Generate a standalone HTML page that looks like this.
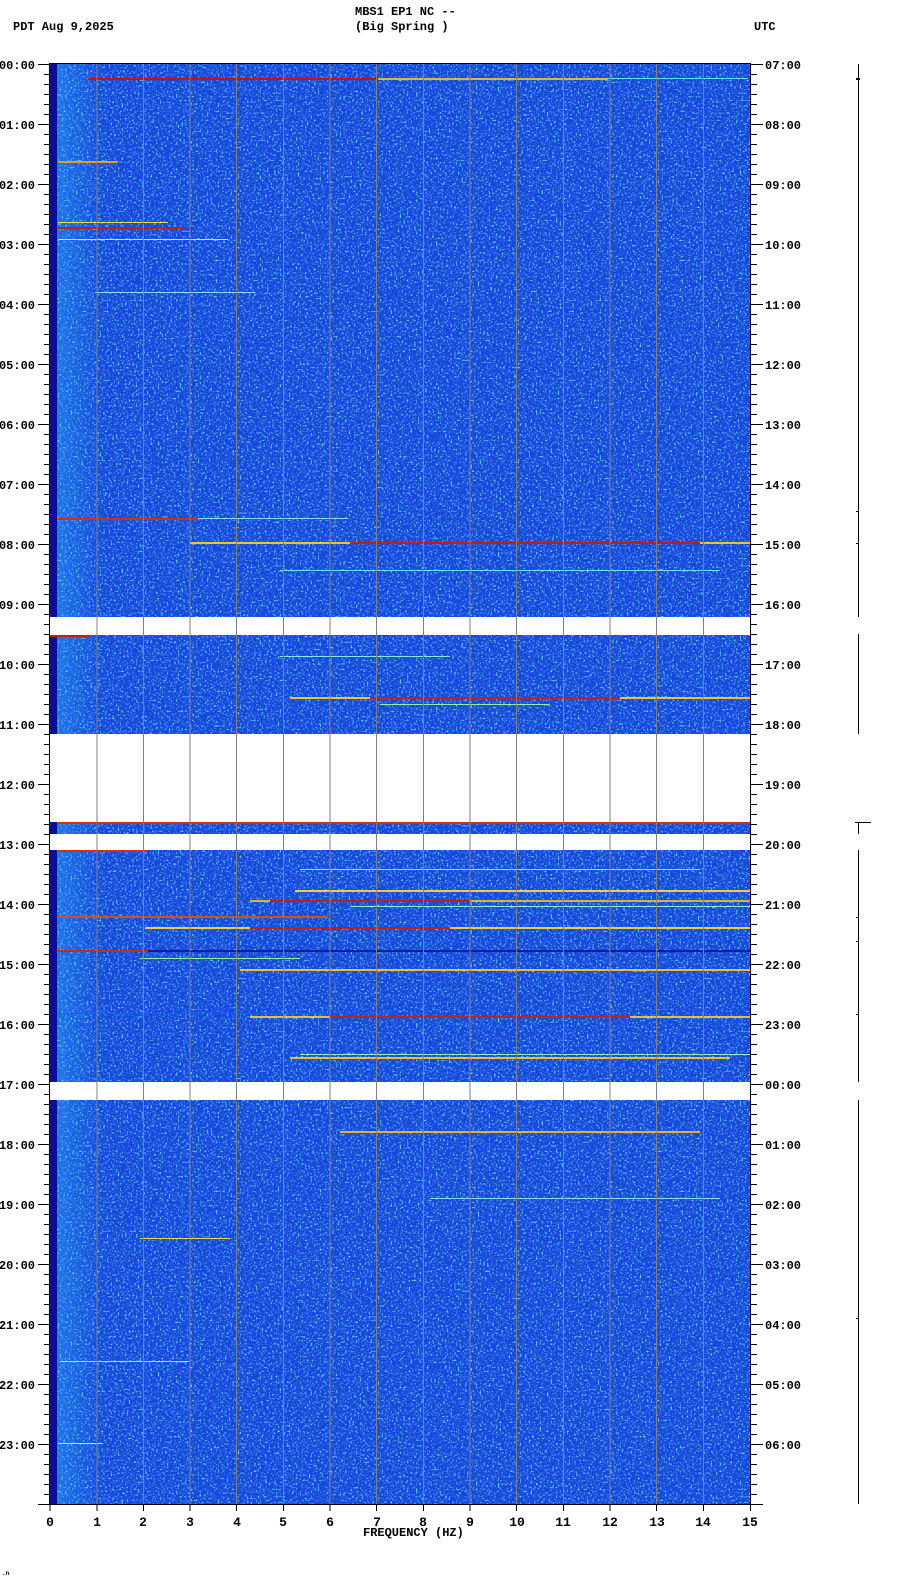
<!DOCTYPE html>
<html><head><meta charset="utf-8"><style>
html,body{margin:0;padding:0;background:#fff;}
svg{display:block;}
text{font-family:"Liberation Mono",monospace;font-weight:bold;fill:#000;}
</style></head><body>
<svg width="902" height="1584" viewBox="0 0 902 1584" xmlns="http://www.w3.org/2000/svg">
<defs>
<filter id="cy" x="50" y="64" width="700" height="1440" filterUnits="userSpaceOnUse">
<feTurbulence type="fractalNoise" baseFrequency="0.55" numOctaves="1" seed="4"/>
<feColorMatrix type="matrix" values="0 0 0 0 0.12  0 0 0 0 0.72  0 0 0 0 1  5 0 0 0 -2.75"/>
</filter>
<filter id="dk" x="50" y="64" width="700" height="1440" filterUnits="userSpaceOnUse">
<feTurbulence type="fractalNoise" baseFrequency="0.5" numOctaves="1" seed="9"/>
<feColorMatrix type="matrix" values="0 0 0 0 0.02  0 0 0 0 0.12  0 0 0 0 0.72  0 5 0 0 -2.5"/>
</filter>
<linearGradient id="lg" x1="0" x2="1" y1="0" y2="0">
<stop offset="0" stop-color="#30c0ff" stop-opacity="0.35"/>
<stop offset="1" stop-color="#30c0ff" stop-opacity="0"/>
</linearGradient>
<pattern id="minL" x="0" y="64" width="12" height="10" patternUnits="userSpaceOnUse"><rect x="0" y="0" width="12" height="1" fill="#000"/></pattern>
<pattern id="majL" x="0" y="64" width="12" height="60" patternUnits="userSpaceOnUse"><rect x="0" y="0" width="12" height="1" fill="#000"/></pattern>
</defs>

<!-- header -->
<text x="355" y="15" font-size="12">MBS1 EP1 NC --</text>
<text x="355" y="30" font-size="12">(Big Spring )</text>
<text x="13" y="30" font-size="12">PDT  Aug 9,2025</text>
<text x="754" y="30" font-size="12">UTC</text>

<!-- data background -->
<rect x="50" y="64" width="700" height="1440" fill="#1644dc"/>
<rect x="50" y="64" width="700" height="1440" filter="url(#dk)"/>
<rect x="50" y="64" width="700" height="1440" filter="url(#cy)"/>
<rect x="57" y="64" width="45" height="1440" fill="url(#lg)"/>
<rect x="50" y="64" width="7" height="1440" fill="#0a0d96"/>

<!-- streaks -->
<g>
<rect x="88" y="78" width="290" height="2" fill="#c81010"/>
<rect x="378" y="78" width="230" height="2" fill="#e8d030" opacity="0.85"/>
<rect x="608" y="78" width="140" height="1" fill="#60e0ff"/>
<rect x="58" y="161" width="60" height="2" fill="#e0a020"/>
<rect x="58" y="222" width="110" height="1" fill="#e8e040"/>
<rect x="58" y="227" width="125" height="2" fill="#c02010"/>
<rect x="58" y="239" width="170" height="1" fill="#f0e060"/>
<rect x="95" y="292" width="160" height="1" fill="#80e0ff"/>
<rect x="58" y="518" width="140" height="2" fill="#d03010"/>
<rect x="198" y="518" width="150" height="1" fill="#80e0ff"/>
<rect x="190" y="542" width="560" height="2" fill="#e8c830"/>
<rect x="350" y="542" width="350" height="2" fill="#c81810"/>
<rect x="280" y="570" width="440" height="1" fill="#70e0ff"/>
<rect x="50" y="635" width="40" height="2" fill="#c02010"/>
<rect x="280" y="656" width="170" height="1" fill="#80e8ff"/>
<rect x="290" y="697" width="460" height="2" fill="#e8c830"/>
<rect x="370" y="697" width="250" height="2" fill="#c82010"/>
<rect x="380" y="704" width="170" height="1" fill="#90f0a0"/>
<rect x="58" y="822" width="692" height="2" fill="#d03010"/>
<rect x="58" y="850" width="90" height="2" fill="#d03010"/>
<rect x="300" y="869" width="400" height="1" fill="#80e0ff"/>
<rect x="295" y="890" width="455" height="2" fill="#e8d040"/>
<rect x="250" y="900" width="500" height="2" fill="#e0b030"/>
<rect x="270" y="900" width="200" height="2" fill="#c02010"/>
<rect x="350" y="906" width="400" height="1" fill="#90f0c0"/>
<rect x="58" y="916" width="270" height="2" fill="#d05020"/>
<rect x="145" y="927" width="605" height="2" fill="#e8d040"/>
<rect x="250" y="927" width="200" height="2" fill="#c02010"/>
<rect x="58" y="950" width="692" height="2" fill="#0a1ca0"/>
<rect x="58" y="950" width="90" height="2" fill="#c03010"/>
<rect x="140" y="958" width="160" height="1" fill="#90f0a0"/>
<rect x="240" y="969" width="510" height="2" fill="#e8c030"/>
<rect x="58" y="1013" width="340" height="1" fill="#c03020"/>
<rect x="250" y="1016" width="500" height="2" fill="#e8c030"/>
<rect x="330" y="1016" width="300" height="2" fill="#c82010"/>
<rect x="300" y="1054" width="450" height="1" fill="#90f0c0"/>
<rect x="290" y="1057" width="440" height="2" fill="#e8c030"/>
<rect x="340" y="1131" width="360" height="2" fill="#e8b030"/>
<rect x="430" y="1198" width="290" height="1" fill="#80e0ff"/>
<rect x="140" y="1238" width="90" height="1" fill="#e0e060"/>
<rect x="60" y="1361" width="130" height="1" fill="#80e8ff"/>
<rect x="58" y="1443" width="45" height="1" fill="#e0e060"/>
</g>

<!-- white gaps -->
<rect x="50" y="617" width="700" height="18" fill="#fff"/>
<rect x="50" y="734" width="700" height="88" fill="#fff"/>
<rect x="50" y="834" width="700" height="16" fill="#fff"/>
<rect x="50" y="1082" width="700" height="18" fill="#fff"/>

<!-- gridlines -->
<g fill="#808080">
<rect x="96.5" y="64" width="1" height="1440"/><rect x="143" y="64" width="1" height="1440"/>
<rect x="189.5" y="64" width="1" height="1440"/><rect x="236" y="64" width="1" height="1440"/>
<rect x="283" y="64" width="1" height="1440"/><rect x="329.5" y="64" width="1" height="1440"/>
<rect x="376" y="64" width="1" height="1440"/><rect x="423" y="64" width="1" height="1440"/>
<rect x="469.5" y="64" width="1" height="1440"/><rect x="516" y="64" width="1" height="1440"/>
<rect x="563" y="64" width="1" height="1440"/><rect x="609.5" y="64" width="1" height="1440"/>
<rect x="656" y="64" width="1" height="1440"/><rect x="703" y="64" width="1" height="1440"/>
</g>

<!-- frame -->
<rect x="49" y="63" width="702" height="1" fill="#000"/>
<rect x="49" y="63" width="1" height="1442" fill="#000"/>
<rect x="750" y="63" width="1" height="1442" fill="#000"/>
<rect x="49" y="1504" width="702" height="1" fill="#000"/>

<!-- y ticks -->
<rect x="44" y="64" width="6" height="1441" fill="url(#minL)"/>
<rect x="38" y="64" width="12" height="1441" fill="url(#majL)"/>
<rect x="751" y="64" width="6" height="1441" fill="url(#minL)"/>
<rect x="751" y="64" width="12" height="1441" fill="url(#majL)"/>

<!-- left labels -->
<g font-size="12" text-anchor="end">
<text x="35" y="69">00:00</text><text x="35" y="129">01:00</text><text x="35" y="189">02:00</text>
<text x="35" y="249">03:00</text><text x="35" y="309">04:00</text><text x="35" y="369">05:00</text>
<text x="35" y="429">06:00</text><text x="35" y="489">07:00</text><text x="35" y="549">08:00</text>
<text x="35" y="609">09:00</text><text x="35" y="669">10:00</text><text x="35" y="729">11:00</text>
<text x="35" y="789">12:00</text><text x="35" y="849">13:00</text><text x="35" y="909">14:00</text>
<text x="35" y="969">15:00</text><text x="35" y="1029">16:00</text><text x="35" y="1089">17:00</text>
<text x="35" y="1149">18:00</text><text x="35" y="1209">19:00</text><text x="35" y="1269">20:00</text>
<text x="35" y="1329">21:00</text><text x="35" y="1389">22:00</text><text x="35" y="1449">23:00</text>
</g>
<!-- right labels -->
<g font-size="12">
<text x="765" y="69">07:00</text><text x="765" y="129">08:00</text><text x="765" y="189">09:00</text>
<text x="765" y="249">10:00</text><text x="765" y="309">11:00</text><text x="765" y="369">12:00</text>
<text x="765" y="429">13:00</text><text x="765" y="489">14:00</text><text x="765" y="549">15:00</text>
<text x="765" y="609">16:00</text><text x="765" y="669">17:00</text><text x="765" y="729">18:00</text>
<text x="765" y="789">19:00</text><text x="765" y="849">20:00</text><text x="765" y="909">21:00</text>
<text x="765" y="969">22:00</text><text x="765" y="1029">23:00</text><text x="765" y="1089">00:00</text>
<text x="765" y="1149">01:00</text><text x="765" y="1209">02:00</text><text x="765" y="1269">03:00</text>
<text x="765" y="1329">04:00</text><text x="765" y="1389">05:00</text><text x="765" y="1449">06:00</text>
</g>

<!-- x ticks and labels -->
<g fill="#000">
<rect x="49.5" y="1504" width="1" height="7"/><rect x="96.5" y="1504" width="1" height="7"/>
<rect x="143" y="1504" width="1" height="7"/><rect x="189.5" y="1504" width="1" height="7"/>
<rect x="236" y="1504" width="1" height="7"/><rect x="283" y="1504" width="1" height="7"/>
<rect x="329.5" y="1504" width="1" height="7"/><rect x="376" y="1504" width="1" height="7"/>
<rect x="423" y="1504" width="1" height="7"/><rect x="469.5" y="1504" width="1" height="7"/>
<rect x="516" y="1504" width="1" height="7"/><rect x="563" y="1504" width="1" height="7"/>
<rect x="609.5" y="1504" width="1" height="7"/><rect x="656" y="1504" width="1" height="7"/>
<rect x="703" y="1504" width="1" height="7"/><rect x="750" y="1504" width="1" height="7"/>
</g>
<g font-size="13" text-anchor="middle">
<text x="50" y="1526">0</text><text x="97" y="1526">1</text><text x="143" y="1526">2</text>
<text x="190" y="1526">3</text><text x="237" y="1526">4</text><text x="283" y="1526">5</text>
<text x="330" y="1526">6</text><text x="377" y="1526">7</text><text x="423" y="1526">8</text>
<text x="470" y="1526">9</text><text x="517" y="1526">10</text><text x="563" y="1526">11</text>
<text x="610" y="1526">12</text><text x="657" y="1526">13</text><text x="703" y="1526">14</text>
<text x="750" y="1526">15</text>
</g>
<text x="363" y="1536" font-size="12">FREQUENCY (HZ)</text>
<text x="2" y="1575" font-size="6">.n</text>

<!-- right status line -->
<g fill="#000">
<rect x="858" y="64" width="1" height="553"/>
<rect x="858" y="634" width="1" height="100"/>
<rect x="858" y="850" width="1" height="232"/>
<rect x="858" y="1100" width="1" height="404"/>
<rect x="855" y="822" width="16" height="1"/>
<rect x="858" y="822" width="1" height="12"/>
<rect x="856" y="78" width="4" height="2"/>
<rect x="856" y="511" width="3" height="1"/>
<rect x="856" y="543" width="3" height="1"/>
<rect x="856" y="917" width="3" height="1"/>
<rect x="856" y="941" width="3" height="1"/>
<rect x="856" y="1014" width="3" height="1"/>
<rect x="856" y="1318" width="3" height="1"/>
</g>
</svg>
</body></html>
